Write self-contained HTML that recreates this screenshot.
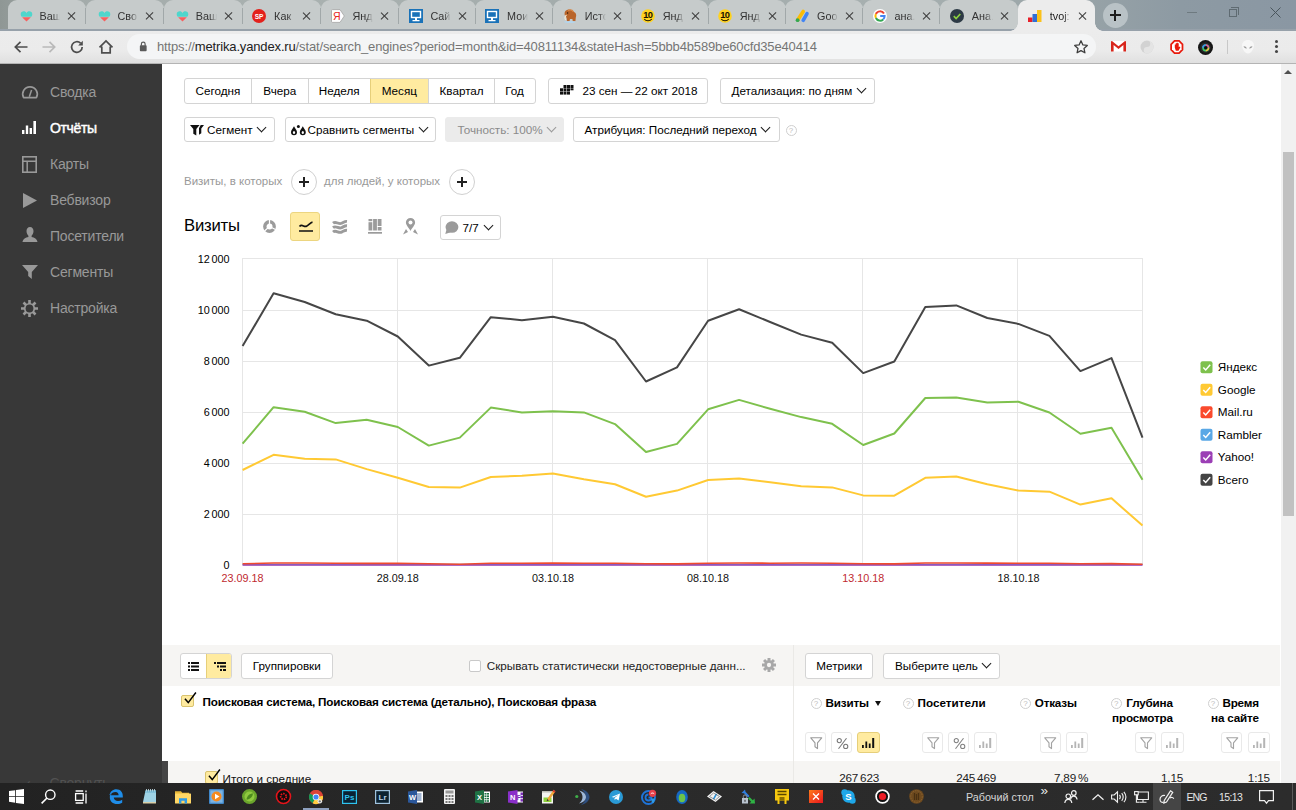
<!DOCTYPE html>
<html lang="ru">
<head>
<meta charset="utf-8">
<title>Яндекс.Метрика</title>
<style>
*{box-sizing:border-box;margin:0;padding:0}
html,body{width:1296px;height:810px;overflow:hidden;background:#fff}
body{position:relative;font-family:"Liberation Sans",Arial,sans-serif;font-size:13px;color:#000}
.abs{position:absolute}
svg{position:absolute;overflow:visible}
/* ---------- browser chrome ---------- */
#tabstrip{position:absolute;left:0;top:0;width:1296px;height:31px;
 background:linear-gradient(90deg,#8f9795 0px,#a3abaa 60px,#a9b1b0 300px,#a2abab 620px,#a7b0b0 900px,#9aa5a8 1060px,#8d9aa3 1180px,#8a97a3 1296px)}
.tab{position:absolute;top:0;height:30px;width:77.8px;background:#c6cbcb;border-radius:9px 9px 0 0}
.tab i{position:absolute;left:77.2px;top:8px;width:1px;height:16px;background:#a1a8a9;z-index:3}
.tab .t{position:absolute;left:31.8px;top:8.5px;font-size:10.8px;line-height:15px;color:#333;width:21px;overflow:hidden;white-space:nowrap;
 -webkit-mask-image:linear-gradient(90deg,#000 65%,transparent 100%);mask-image:linear-gradient(90deg,#000 65%,transparent 100%)}
.tab .x{position:absolute;left:59.8px;top:11.5px;width:9px;height:9px}
.tab .x:before,.tab .x:after{content:"";position:absolute;left:4px;top:-0.5px;width:1.3px;height:10px;background:#3c3c3c}
.tab .x:before{transform:rotate(45deg)}.tab .x:after{transform:rotate(-45deg)}
.tab .f{position:absolute;left:10.2px;top:8.7px;width:14px;height:14px}
.tab.act{background:#ececec;z-index:2;height:31px}
.tab.act .t{color:#1c1c1c}
.tab.act:before,.tab.act:after{content:"";position:absolute;bottom:0;width:8px;height:8px}
.tab.act:before{left:-8px;background:radial-gradient(circle at 0 0,transparent 7.5px,#ececec 8px)}
.tab.act:after{right:-8px;background:radial-gradient(circle at 100% 0,transparent 7.5px,#ececec 8px)}
.tab.act i,.tab.nosep i{display:none}
#tabline{position:absolute;left:0;top:29px;width:1296px;height:2px;background:#97a1aa;z-index:1}
#toolbar{position:absolute;left:0;top:31px;width:1296px;height:33px;background:linear-gradient(180deg,#ececec 0,#ebebeb 60%,#e0e0e0 100%);border-bottom:1px solid #b4b4b4}
#omni{position:absolute;left:127px;top:3px;width:969px;height:25px;border-radius:13px;background:#f4f5f6}
#url{position:absolute;left:30px;top:4.4px;font-size:13px;line-height:17px;color:#757575;white-space:nowrap;letter-spacing:-0.15px}
#url b{font-weight:normal;color:#222}
/* ---------- sidebar ---------- */
#side{position:absolute;left:0;top:64px;width:162px;height:719px;background:#383838}
.nav{position:absolute;left:50px;margin-top:0.8px;font-size:14px;line-height:18px;color:#999;white-space:nowrap;letter-spacing:-0.2px}
.nav.on{color:#fff;font-weight:normal;font-size:14px;letter-spacing:-0.35px;-webkit-text-stroke:0.45px #fff}
/* ---------- scroll bar ---------- */
#sb{position:absolute;left:1280.7px;top:64px;width:15.3px;height:719px;background:#f1f1f1}
#sb .th{position:absolute;left:2.3px;top:88px;width:11px;height:364.3px;background:#c1c1c1}
#sb .up{position:absolute;left:3.5px;top:6px;width:0;height:0;border:4px solid transparent;border-top:0;border-bottom:4px solid #505050}
/* ---------- page controls ---------- */
.btn{position:absolute;height:25.4px;border:1px solid #d4d4d4;border-radius:3px;background:#fff;font-size:11.7px;line-height:23px;white-space:nowrap;text-align:center;color:#000}
.grp{position:absolute;height:25px;border:1px solid #d4d4d4;border-radius:3px;background:#fff;overflow:hidden}
.grp span{position:absolute;top:0;bottom:0;line-height:23px;text-align:center;font-size:11.7px;border-left:1px solid #d4d4d4;white-space:nowrap}
.grp span:first-child{border-left:0}
.grp span.y{background:#ffeba0;border-left-color:#e6cf7a}
.car{display:inline-block;width:7px;height:7px;border-right:1.6px solid #1a1a1a;border-bottom:1.6px solid #1a1a1a;transform:rotate(45deg);position:relative;top:-3px;margin-left:5.5px}
.gtx{position:absolute;font-size:11.5px;color:#999;white-space:nowrap;line-height:14px}
.plus{position:absolute;width:26px;height:26px;border:1px solid #d0d0d0;border-radius:50%;background:#fff}
.plus:before{content:"";position:absolute;left:7px;top:11px;width:10px;height:2px;background:#222}
.plus:after{content:"";position:absolute;left:11px;top:7px;width:2px;height:10px;background:#222}
/* ---------- table ---------- */
#tbl{position:absolute;left:162px;top:645px;width:1118px;height:138px;background:#f6f5f3}
#thead{position:absolute;left:0;top:41px;width:1118px;height:75px;background:#fff}
.hb{position:absolute;font-weight:bold;font-size:11.7px;line-height:15px;white-space:nowrap;color:#000;letter-spacing:-0.2px}
.q{position:absolute;width:11px;height:11px;border:1px solid #cfcfcf;border-radius:50%;font-size:8px;line-height:9px;text-align:center;color:#bdbdbd}
.ib{position:absolute;top:87px;width:21px;height:21px;border:1px solid #e9e9e9;border-radius:3px;background:#fff}
.ib.y{background:#ffeba0;border-color:#e6cf7a}
.val{position:absolute;top:126px;font-size:11.7px;line-height:14px;color:#222;white-space:nowrap;text-align:right;letter-spacing:-0.2px}
/* ---------- taskbar ---------- */
#task{position:absolute;left:0;top:783px;width:1296px;height:27px;background:linear-gradient(90deg,#222 0,#262626 300px,#2a2a2a 600px,#2c2c2c 1296px)}
.tk{position:absolute;top:0;width:24px;height:27px}
.tt{position:absolute;color:#e6e6e6;font-size:11.5px;line-height:14px;white-space:nowrap;top:7px}
</style>
</head>
<body>

<!-- ================= BROWSER CHROME ================= -->
<div id="tabstrip">
<div id="tabline"></div>
<div class="tab" style="left:7.7px;width:78.3px"><svg class="f" viewBox="-1.5 0 14 14"><path d="M7 4.2C6.2 1.6 1.2 1.6 1.2 5.2c0 1 .4 1.9 1 2.6h9.6c.6-.7 1-1.6 1-2.6C12.8 1.6 7.8 1.6 7 4.2z" fill="#4fd6cc"/><path d="M2.6 8.2h8.8L7 12.4z" fill="#f8605f"/></svg><span class="t">Ваш</span><span class="x"></span><i style="left:77.5px"></i></div>
<div class="tab" style="left:85.7px;width:78.6px"><svg class="f" viewBox="-1.5 0 14 14"><path d="M7 4.2C6.2 1.6 1.2 1.6 1.2 5.2c0 1 .4 1.9 1 2.6h9.6c.6-.7 1-1.6 1-2.6C12.8 1.6 7.8 1.6 7 4.2z" fill="#4fd6cc"/><path d="M2.6 8.2h8.8L7 12.4z" fill="#f8605f"/></svg><span class="t">Сво,</span><span class="x"></span><i style="left:77.8px"></i></div>
<div class="tab" style="left:164.0px;width:78.6px"><svg class="f" viewBox="-1.5 0 14 14"><path d="M7 4.2C6.2 1.6 1.2 1.6 1.2 5.2c0 1 .4 1.9 1 2.6h9.6c.6-.7 1-1.6 1-2.6C12.8 1.6 7.8 1.6 7 4.2z" fill="#4fd6cc"/><path d="M2.6 8.2h8.8L7 12.4z" fill="#f8605f"/></svg><span class="t">Ваш</span><span class="x"></span><i style="left:77.8px"></i></div>
<div class="tab" style="left:242.3px;width:78.7px"><svg class="f" viewBox="0 0 14 14"><circle cx="7" cy="7" r="7" fill="#e3211c"/><text x="7" y="9.6" font-size="6.5" font-weight="bold" fill="#fff" text-anchor="middle" font-family="Liberation Sans,sans-serif">SP</text></svg><span class="t">Как</span><span class="x"></span><i style="left:77.9px"></i></div>
<div class="tab" style="left:320.7px;width:78.2px"><svg class="f" viewBox="0 0 14 14"><path d="M1.5 .6h7.5l4.300 6.4-4.300 6.4H1.5a1 1 0 0 1-1-1V1.6a1 1 0 0 1 1-1z" fill="#fff" stroke="#a2a2a2" stroke-width=".8"/><text x="5.700" y="10.8" font-size="10.5" fill="#e8281e" text-anchor="middle" font-family="Liberation Sans,sans-serif">Я</text></svg><span class="t">Янд</span><span class="x"></span><i style="left:77.4px"></i></div>
<div class="tab" style="left:398.6px;width:77.0px"><svg class="f" viewBox="0 0 14 14"><rect width="14" height="14" fill="#1a72b8"/><rect x="2.5" y="2.5" width="9" height="6" fill="none" stroke="#fff" stroke-width="1.4"/><path d="M6 9h2v2h2.5v1.300h-7V11H6z" fill="#fff"/></svg><span class="t">Сай</span><span class="x"></span><i style="left:76.2px"></i></div>
<div class="tab" style="left:475.3px;width:78.0px"><svg class="f" viewBox="0 0 14 14"><rect width="14" height="14" fill="#1a72b8"/><rect x="2.5" y="2.5" width="9" height="6" fill="none" stroke="#fff" stroke-width="1.4"/><path d="M6 9h2v2h2.5v1.300h-7V11H6z" fill="#fff"/></svg><span class="t">Мои</span><span class="x"></span><i style="left:77.2px"></i></div>
<div class="tab" style="left:553.0px;width:78.3px"><svg class="f" viewBox="0 0 14 14"><path d="M2.2 2.2C4.2-.3 9.5-.2 11 3c2 .6 2.8 3.2 1.8 5.4l-.4 3.8h-2.6l-.4-2.2H7l-.5 2.2H4l-.4-3.4C1.5 7.5 1 4 2.2 2.2z" fill="#b9652b"/><path d="M5 1.5c2-.8 4.5-.3 5.5 1.5" stroke="#d98a4a" stroke-width="1.2" fill="none"/><path d="M3.5 6C1.8 7.2 1.5 9.6 2.8 11" stroke="#f6ecd8" stroke-width="1.100" fill="none"/><circle cx="4.6" cy="4" r=".7" fill="#2a1606"/><ellipse cx="7" cy="13" rx="6" ry=".9" fill="#b5d5ec"/></svg><span class="t">Исто</span><span class="x"></span><i style="left:77.5px"></i></div>
<div class="tab" style="left:631.0px;width:77.3px"><svg class="f" viewBox="0 0 14 14"><circle cx="7" cy="7" r="6.8" fill="#ffd21f"/><text x="6.8" y="8.6" font-size="9.300" font-weight="bold" fill="#1a1200" text-anchor="middle" letter-spacing="-.6" font-family="Liberation Sans,sans-serif">10</text><path d="M3.2 10c2 2.4 5.6 2.4 7.6 0" stroke="#1a1200" stroke-width="1.100" fill="none"/></svg><span class="t">Янд</span><span class="x"></span><i style="left:76.5px"></i></div>
<div class="tab" style="left:708.0px;width:77.6px"><svg class="f" viewBox="0 0 14 14"><circle cx="7" cy="7" r="6.8" fill="#ffd21f"/><text x="6.8" y="8.6" font-size="9.300" font-weight="bold" fill="#1a1200" text-anchor="middle" letter-spacing="-.6" font-family="Liberation Sans,sans-serif">10</text><path d="M3.2 10c2 2.4 5.6 2.4 7.6 0" stroke="#1a1200" stroke-width="1.100" fill="none"/></svg><span class="t">Янд</span><span class="x"></span><i style="left:76.8px"></i></div>
<div class="tab" style="left:785.3px;width:77.7px"><svg class="f" viewBox="0 0 14 14"><path d="M2.8 10.8L8.2 2.5" stroke="#fbbc04" stroke-width="3.6" stroke-linecap="round"/><path d="M8.2 11.300L12 4.6" stroke="#4285f4" stroke-width="3.6" stroke-linecap="round"/><circle cx="2.6" cy="11.2" r="1.900" fill="#34a853"/></svg><span class="t">Goo</span><span class="x"></span><i style="left:76.9px"></i></div>
<div class="tab" style="left:862.7px;width:77.6px"><svg class="f" viewBox="0 0 14 14"><circle cx="7" cy="7" r="7" fill="#fff"/><path d="M11 4.6A4.6 4.6 0 0 0 2.900 5" stroke="#ea4335" stroke-width="2" fill="none"/><path d="M2.900 5a4.6 4.6 0 0 0 0 4" stroke="#fbbc05" stroke-width="2" fill="none"/><path d="M2.900 9a4.6 4.6 0 0 0 7.300 1.4" stroke="#34a853" stroke-width="2" fill="none"/><path d="M10.2 10.4A4.6 4.6 0 0 0 11.6 7H7.2" stroke="#4285f4" stroke-width="2" fill="none"/></svg><span class="t">ана.</span><span class="x"></span><i style="left:76.8px"></i></div>
<div class="tab nosep" style="left:940.0px;width:78.3px"><svg class="f" viewBox="0 0 14 14"><circle cx="7" cy="7" r="7" fill="#2d3a45"/><path d="M3.8 7.2l2.300 2.300 4.2-4.5" stroke="#8bd13f" stroke-width="1.700" fill="none"/></svg><span class="t">Ана.</span><span class="x"></span><i style="left:77.5px"></i></div>
<div class="tab act" style="left:1018.0px;width:77.0px"><svg class="f" viewBox="0 0 14 14"><rect x="0" y="8.5" width="4.5" height="4.5" fill="#e8202a"/><rect x="4.5" y="5" width="4.5" height="8" fill="#2f6fd6"/><rect x="9" y="1" width="4.5" height="12" fill="#fbc21b"/></svg><span class="t">tvoj:</span><span class="x"></span><i style="left:76.2px"></i></div>
<div class="abs" style="left:1102.5px;top:2.5px;width:25px;height:25px;border-radius:50%;background:#b9c2c6"></div>
<div class="abs" style="left:1109.5px;top:14px;width:11px;height:2px;background:#1d1d1d"></div><div class="abs" style="left:1114px;top:9.5px;width:2px;height:11px;background:#1d1d1d"></div>
<div class="abs" style="left:1187px;top:12px;width:10px;height:1px;background:#6e7a80"></div>
<div class="abs" style="left:1229px;top:9px;width:8px;height:8px;border:1px solid #5f6b72"></div><div class="abs" style="left:1231px;top:7px;width:8px;height:8px;border-top:1px solid #5f6b72;border-right:1px solid #5f6b72"></div>
<svg style="left:1270px;top:7px" width="11" height="11" viewBox="0 0 11 11"><path d="M.5.5l10 10M10.5.5l-10 10" stroke="#4a565d" stroke-width="1"/></svg>
</div>
<div id="toolbar">
<svg style="left:13px;top:8px" width="16" height="16" viewBox="0 0 16 16"><path d="M14.5 8H2.500M7.5 2.800L2.3 8l5.2 5.2" stroke="#4d4d4d" stroke-width="1.7" fill="none"/></svg>
<svg style="left:41px;top:8px" width="16" height="16" viewBox="0 0 16 16"><path d="M1.5 8h12M8.5 2.800L13.7 8l-5.2 5.2" stroke="#b9b9b9" stroke-width="1.7" fill="none"/></svg>
<svg style="left:69px;top:8px" width="16" height="16" viewBox="0 0 16 16"><path d="M13.2 8A5.3 5.3 0 1 1 11.6 4.2" stroke="#4d4d4d" stroke-width="1.7" fill="none"/><path d="M13.8 1.800v4.600H9.200z" fill="#4d4d4d"/></svg>
<svg style="left:98px;top:8px" width="16" height="16" viewBox="0 0 16 16"><path d="M1.5 8.300L8 2l6.5 6.300M3.8 7.500v6.300h8.400V7.5" stroke="#4d4d4d" stroke-width="1.7" fill="none"/></svg>
<div id="omni">
 <svg style="left:11.5px;top:7px" width="8.5" height="11" viewBox="0 0 10 13"><rect x="1" y="5" width="8" height="7" rx="1" fill="#5a5a5a"/><path d="M2.8 5.500V3.600a2.2 2.2 0 0 1 4.4 0v1.9" stroke="#5a5a5a" stroke-width="1.4" fill="none"/></svg>
 <div id="url">https://<b>metrika.yandex.ru</b>/stat/search_engines?period=month&amp;id=40811134&amp;stateHash=5bbb4b589be60cfd35e40414</div>
 <svg style="left:946px;top:5px" width="16" height="16" viewBox="0 0 16 16"><path d="M8 1.800l1.9 4.1 4.4.5-3.3 3 .9 4.400L8 11.600l-3.9 2.2.9-4.4-3.3-3 4.4-.5z" stroke="#3d3d3d" stroke-width="1.3" fill="none" stroke-linejoin="round"/></svg>
</div>
<!-- extensions -->
<svg style="left:1111px;top:10.2px" width="15" height="10.5" viewBox="0 0 15 10.5"><rect x="0" y="0" width="15" height="10.5" rx=".8" fill="#fff"/><path d="M0 .8V10.500h2.600V4L7.5 8l4.9-4v6.500H15V.8C15 .2 14.3-.2 13.7.3L7.5 5.2 1.3.3C.7-.2 0 .2 0 .8z" fill="#d8261c"/></svg>
<svg style="left:1140px;top:9px" width="14" height="14" viewBox="0 0 14 14"><circle cx="7" cy="7" r="6.5" fill="#d2d2d2"/><path d="M7 .5a6.5 6.5 0 0 1 0 13 3.250 3.250 0 0 1 0-6.5 3.250 3.250 0 0 0 0-6.500z" fill="#e4e4e4"/></svg>
<svg style="left:1169.800px;top:8.800px" width="13.6" height="14" viewBox="0 0 15 16"><path d="M4.5 0h6L15 4.500v7L10.5 16h-6L0 11.500v-7z" fill="#e81a0c"/><path d="M5.3 2h4.400L13 5.300v5.400L9.7 14H5.300L2 10.700V5.300z" fill="#fff"/><path d="M5.2 8.600V5h1.100V3.800h1.100V3.200h1.200v.6h1.100V8.400l1-.9.9.8-2.1 4H6.400z" fill="#e81a0c"/></svg>
<svg style="left:1197.500px;top:8.500px" width="15" height="15" viewBox="0 0 16 16"><circle cx="8" cy="8" r="8" fill="#161616"/><circle cx="8" cy="8" r="5.6" fill="#2a2a2a"/><circle cx="8.3" cy="8.3" r="3" fill="none" stroke="#38c76a" stroke-width="1.7"/><path d="M8.3 5.300A3 3 0 0 1 11.3 8.3" stroke="#e94f9a" stroke-width="1.7" fill="none"/><path d="M11.3 8.300A3 3 0 0 1 8.3 11.3" stroke="#f2c03a" stroke-width="1.7" fill="none"/><path d="M5.3 8.300A3 3 0 0 1 8.3 5.3" stroke="#3f8cf0" stroke-width="1.7" fill="none"/><circle cx="8.3" cy="8.3" r="1.5" fill="#0c0c0c"/></svg>
<div class="abs" style="left:1227px;top:9px;width:1px;height:14px;background:#c8c8c8"></div>
<svg style="left:1240px;top:8px" width="16" height="16" viewBox="0 0 16 16"><path d="M8 1c3.6 0 6 2.4 6 5.5 0 3.5-3 8-6 8s-6-4.5-6-8C2 3.4 4.4 1 8 1z" fill="#f7f7f7"/><path d="M3.6 7.200c1.4-.2 2.8.6 3.2 2.2-1.6.2-2.9-.7-3.2-2.200zm8.8 0c-1.4-.2-2.8.6-3.2 2.2 1.6.2 2.9-.7 3.2-2.200z" fill="#9a9a9a"/></svg>
<div class="abs" style="left:1275px;top:9px;width:3px;height:3px;border-radius:50%;background:#444;box-shadow:0 5px 0 #444,0 10px 0 #444"></div>

</div>

<!-- ================= SIDEBAR ================= -->
<div id="side">
<svg style="left:21px;top:21px" width="18" height="14" viewBox="0 0 18 14"><path d="M2.600 12.600A7.300 7.300 0 1 1 15.400 12.600z" fill="none" stroke="#999" stroke-width="1.700" stroke-linejoin="round"/><path d="M8.300 11.800L10.600 5" stroke="#999" stroke-width="1.500"/></svg>
<div class="nav" style="top:18px">Сводка</div>
<svg style="left:22px;top:57px" width="14" height="13" viewBox="0 0 14 13"><rect x="0" y="9" width="2.400" height="4" fill="#fff"/><rect x="3.800" y="4.500" width="2.400" height="8.500" fill="#fff"/><rect x="7.600" y="7" width="2.400" height="6" fill="#fff"/><rect x="11.400" y="0" width="2.600" height="13" fill="#fff"/></svg>
<div class="nav on" style="top:54px">Отчёты</div>
<svg style="left:22px;top:92px" width="15" height="17" viewBox="0 0 15 17"><rect x=".8" y=".8" width="13.400" height="15.400" fill="none" stroke="#999" stroke-width="1.600"/><path d="M.8 5.200h13.400M5.200 5.200v11" stroke="#999" stroke-width="1.500"/></svg>
<div class="nav" style="top:90px">Карты</div>
<svg style="left:23px;top:129px" width="14" height="15" viewBox="0 0 14 15"><path d="M0 0l14 7.500L0 15z" fill="#999"/></svg>
<div class="nav" style="top:126px">Вебвизор</div>
<svg style="left:22px;top:163px" width="16" height="15" viewBox="0 0 16 15"><path d="M8 0c2.200 0 3.500 1.700 3.500 4S10.300 8.200 9.600 8.800v1.200c2.800.6 5.400 1.800 5.900 5H.5c.5-3.200 3.100-4.400 5.900-5V8.800C5.700 8.200 4.500 6.300 4.500 4S5.800 0 8 0z" fill="#999"/></svg>
<div class="nav" style="top:162px">Посетители</div>
<svg style="left:22px;top:201px" width="16" height="14" viewBox="0 0 16 14"><path d="M0 0h16L9.800 7v7L6.200 11V7z" fill="#999"/></svg>
<div class="nav" style="top:198px">Сегменты</div>
<svg style="left:21px;top:236px" width="17" height="17" viewBox="0 0 17 17"><g stroke="#999" stroke-width="2.600"><path d="M8.500 0v17M0 8.500h17M2.500 2.500l12 12M14.500 2.500l-12 12"/></g><circle cx="8.500" cy="8.500" r="5.600" fill="#999"/><circle cx="8.500" cy="8.500" r="3.900" fill="#383838"/></svg>
<div class="nav" style="top:234px">Настройка</div>
<div class="abs" style="left:26px;top:710.3px;font-size:14px;line-height:18px;color:#525252;white-space:nowrap">‹</div><div class="abs" style="left:49.5px;top:710.3px;font-size:14px;line-height:18px;color:#525252;white-space:nowrap;letter-spacing:-0.2px">Свернуть</div>

</div>

<!-- ================= CONTROLS ================= -->
<div class="grp" style="left:184px;top:78.2px;width:351.6px;height:25.6px">
 <span style="left:0;width:66px">Сегодня</span><span style="left:66px;width:56.5px">Вчера</span><span style="left:122.5px;width:62.5px">Неделя</span><span class="y" style="left:185px;width:57.7px">Месяц</span><span style="left:242.7px;width:66.8px">Квартал</span><span style="left:308.6px;width:41px">Год</span>
</div>
<div class="btn" style="left:548px;top:78.2px;height:25.6px;width:160px;text-align:left;padding-left:33.5px">23 сен —&thinsp;22 окт 2018
 <svg style="left:11px;top:6.3px" width="13.5" height="9.6" viewBox="0 0 13.5 9.6"><g fill="#111"><rect x="3.5" y="0" width="3" height="3"/><rect x="7" y="0" width="3" height="3"/><rect x="10.5" y="0" width="3" height="3"/><rect x="0" y="3.3" width="3" height="3"/><rect x="3.5" y="3.3" width="3" height="3"/><rect x="7" y="3.3" width="3" height="3"/><rect x="10.5" y="3.3" width="3" height="2"/><rect x="0" y="6.6" width="3" height="3"/><rect x="3.5" y="6.6" width="3" height="3"/><rect x="7" y="6.6" width="3" height="3"/></g></svg>
</div>
<div class="btn" style="left:720px;top:78.2px;height:25.6px;width:154.5px;text-align:left;padding-left:10.5px">Детализация: по дням<i class="car"></i></div>

<div class="btn" style="left:184px;top:117px;width:90.5px;text-align:left;padding-left:22px">Сегмент<i class="car"></i>
 <svg style="left:5px;top:6.5px" width="14" height="10.5" viewBox="0 0 14 10.5"><path d="M0 0h9.6L6.3 4v6.5L3.3 8.7V4z" fill="#111"/><path d="M10.7 0H14L11.3 3.6v4.6L9 9.8V3.3z" fill="#111"/></svg>
</div>
<div class="btn" style="left:284.5px;top:117px;width:151px;text-align:left;padding-left:22px">Сравнить сегменты<i class="car"></i>
 <svg style="left:5px;top:6.5px" width="15" height="10.5" viewBox="0 0 15 10.5"><path d="M3 1.2C4.3 3.5 6 5.3 6 7.3a3 3 0 0 1-6 0C0 5.3 1.7 3.5 3 1.2z" fill="#111"/><ellipse cx="3" cy="7.400" rx="1.1" ry="1.5" fill="#fff"/><path d="M11.8 1.2c1.3 2.3 3 4.1 3 6.1a3 3 0 0 1-6 0c0-2 1.7-3.8 3-6.1z" fill="#111"/><ellipse cx="11.8" cy="7.400" rx="1.1" ry="1.5" fill="#fff"/><circle cx="7.400" cy="1.5" r="1.5" fill="#111"/></svg>
</div>
<div class="btn" style="left:444.5px;top:117px;width:119.5px;text-align:left;padding-left:12px;background:#ebebeb;border-color:#ebebeb;color:#8a8a8a">Точность: 100%<i class="car" style="border-color:#999"></i></div>
<div class="btn" style="left:573px;top:117px;width:206.5px;text-align:left;padding-left:10.5px">Атрибуция: Последний переход<i class="car"></i></div>
<div class="q" style="left:785.5px;top:125px">?</div>

<div class="gtx" style="left:184px;top:174px">Визиты, в которых</div>
<div class="plus" style="left:291px;top:168.5px"></div>
<div class="gtx" style="left:324px;top:174px">для людей, у которых</div>
<div class="plus" style="left:448.5px;top:168.5px"></div>

<div class="abs" id="ttl" style="left:184px;top:215px;font-size:16.7px;line-height:22px;letter-spacing:-0.2px">Визиты</div>
<!-- chart type icons -->
<svg style="left:263px;top:220px" width="13" height="13" viewBox="0 0 13 13"><circle cx="6.5" cy="6.5" r="4.7" fill="none" stroke="#9b9b9b" stroke-width="3.4"/><path d="M6.5 6.5L6.5 0M6.5 6.5L12.5 9.5M6.5 6.5L1.5 11" stroke="#fff" stroke-width="1.2"/></svg>
<div class="abs" style="left:290px;top:212px;width:30px;height:28.5px;background:#ffeba0;border:1px solid #ecd580;border-radius:3px"></div>
<svg style="left:298.5px;top:221px" width="14" height="11" viewBox="0 0 14 11"><path d="M.5 5.5C3 2.5 5 6.5 7.5 5.2S11.5 1.5 13.5 1.2" stroke="#111" stroke-width="1.7" fill="none"/><path d="M0 10h14" stroke="#111" stroke-width="1.5"/></svg>
<svg style="left:333px;top:219.5px" width="14" height="14" viewBox="0 0 14 14"><g fill="none" stroke="#9b9b9b" stroke-width="2.9"><path d="M0 3.2C3 .7 5.5 4.8 8.5 3.3S12 1.2 14 1.400"/><path d="M0 7.6C3 5.1 5.5 9.2 8.5 7.7S12 5.6 14 5.8"/><path d="M0 12C3 9.5 5.5 13.6 8.5 12.1S12 10 14 10.2"/></g></svg>
<svg style="left:368px;top:219px" width="14" height="15" viewBox="0 0 14 15"><g fill="#9b9b9b"><rect x=".5" y="3.2" width="3.8" height="8.3"/><rect x=".5" y="0" width="3.8" height="2.2"/><rect x="5.1" y="0" width="3.8" height="11.5"/><rect x="9.7" y="0" width="3.8" height="7"/><rect x="9.7" y="8" width="3.8" height="3.5"/><rect x="0" y="13" width="14" height="1.7"/></g></svg>
<svg style="left:403px;top:218px" width="15" height="17" viewBox="0 0 15 17"><path d="M7.5 0a4.6 4.6 0 0 1 4.6 4.6c0 2.8-3.2 5.4-4.6 8.4C6.1 10 2.900 7.4 2.900 4.6A4.6 4.6 0 0 1 7.5 0z" fill="#9b9b9b"/><circle cx="7.5" cy="4.6" r="2" fill="#fff"/><path d="M0 16.5L3 11l2 3zM15 16.5L12 11l-2 3z" fill="#9b9b9b"/></svg>
<div class="btn" style="left:440px;top:215px;width:61px;text-align:left;padding-left:21.5px">7/7<i class="car" style="margin-left:6px"></i>
 <svg style="left:3.5px;top:4.5px" width="13.5" height="13.5" viewBox="0 0 13 13"><ellipse cx="6.7" cy="5.8" rx="6.2" ry="5.6" fill="#9b9b9b"/><path d="M1.5 8L.3 12.6 5.5 10.8z" fill="#9b9b9b"/></svg>
</div>


<!-- ================= CHART ================= -->
<svg style="left:0;top:0" width="1296" height="810" viewBox="0 0 1296 810" font-family="Liberation Sans,Arial,sans-serif">
<g stroke="#e6e6e6" stroke-width="1" fill="none">
<path d="M242.5 565.5H1142.5"/>
<path d="M242.5 514.5H1142.5"/>
<path d="M242.5 463.5H1142.5"/>
<path d="M242.5 412.5H1142.5"/>
<path d="M242.5 361.5H1142.5"/>
<path d="M242.5 310.5H1142.5"/>
<path d="M242.5 258.5H1142.5"/>
<path d="M242.5 258V565"/>
<path d="M397.5 258V565"/>
<path d="M552.5 258V565"/>
<path d="M707.5 258V565"/>
<path d="M862.5 258V565"/>
<path d="M1017.5 258V565"/>
<path d="M1142.5 258V565"/>
</g>
<g font-size="10.8" fill="#000" text-anchor="end">
<text x="229.5" y="569.1" word-spacing="-1.2">0</text>
<text x="229.5" y="518.1" word-spacing="-1.2">2 000</text>
<text x="229.5" y="467.0" word-spacing="-1.2">4 000</text>
<text x="229.5" y="416.0" word-spacing="-1.2">6 000</text>
<text x="229.5" y="365.0" word-spacing="-1.2">8 000</text>
<text x="229.5" y="313.9" word-spacing="-1.2">10 000</text>
<text x="229.5" y="262.9" word-spacing="-1.2">12 000</text>
</g>
<g font-size="10.8" text-anchor="middle">
<text x="242.6" y="582.3" fill="#c02a30">23.09.18</text>
<text x="397.8" y="582.3" fill="#111">28.09.18</text>
<text x="552.9" y="582.3" fill="#111">03.10.18</text>
<text x="708.1" y="582.3" fill="#111">08.10.18</text>
<text x="863.2" y="582.3" fill="#c02a30">13.10.18</text>
<text x="1018.4" y="582.3" fill="#111">18.10.18</text>
</g>
<polyline points="242.6,564.4 273.6,564.4 304.7,564.4 335.7,564.4 366.7,564.4 397.8,564.4 428.8,564.4 459.8,564.4 490.8,564.4 521.9,564.4 552.9,564.4 583.9,564.4 615.0,564.4 646.0,564.4 677.0,564.4 708.1,564.4 739.1,564.4 770.1,564.4 801.2,564.4 832.2,564.4 863.2,564.4 894.3,564.4 925.3,564.4 956.3,564.4 987.3,564.4 1018.4,564.4 1049.4,564.4 1080.4,564.4 1111.5,564.4 1142.5,564.4" fill="none" stroke="#5aa8e6" stroke-width="1.2" stroke-linejoin="round"/>
<polyline points="242.6,565.0 273.6,565.0 304.7,565.0 335.7,565.0 366.7,565.0 397.8,565.0 428.8,565.0 459.8,565.0 490.8,565.0 521.9,565.0 552.9,565.0 583.9,565.0 615.0,565.0 646.0,565.0 677.0,565.0 708.1,565.0 739.1,565.0 770.1,565.0 801.2,565.0 832.2,565.0 863.2,565.0 894.3,565.0 925.3,565.0 956.3,565.0 987.3,565.0 1018.4,565.0 1049.4,565.0 1080.4,565.0 1111.5,565.0 1142.5,565.0" fill="none" stroke="#9b3fb5" stroke-width="1.5" stroke-linejoin="round"/>
<polyline points="242.6,563.8 273.6,563.0 304.7,563.0 335.7,563.3 366.7,563.4 397.8,563.2 428.8,563.8 459.8,564.2 490.8,563.2 521.9,563.3 552.9,563.1 583.9,563.2 615.0,563.2 646.0,563.8 677.0,563.9 708.1,563.2 739.1,563.0 770.1,563.2 801.2,563.0 832.2,563.2 863.2,563.8 894.3,563.9 925.3,563.0 956.3,563.0 987.3,563.1 1018.4,563.2 1049.4,563.3 1080.4,563.8 1111.5,563.6 1142.5,564.2" fill="none" stroke="#f04a2e" stroke-width="1.6" stroke-linejoin="round"/>
<polyline points="242.6,470.0 273.6,454.8 304.7,458.7 335.7,459.4 366.7,469.1 397.8,477.8 428.8,487.0 459.8,487.6 490.8,477.0 521.9,475.7 552.9,473.5 583.9,479.3 615.0,484.3 646.0,496.7 677.0,490.6 708.1,480.0 739.1,478.5 770.1,482.2 801.2,486.3 832.2,487.4 863.2,495.4 894.3,495.7 925.3,477.8 956.3,476.5 987.3,484.3 1018.4,490.6 1049.4,491.7 1080.4,504.6 1111.5,498.3 1142.5,525.6" fill="none" stroke="#ffc933" stroke-width="2.0" stroke-linejoin="round"/>
<polyline points="242.6,443.7 273.6,407.2 304.7,411.8 335.7,423.1 366.7,419.8 397.8,427.0 428.8,445.6 459.8,437.6 490.8,407.6 521.9,412.4 552.9,411.3 583.9,412.4 615.0,424.1 646.0,452.0 677.0,443.9 708.1,409.3 739.1,399.9 770.1,408.8 801.2,417.1 832.2,423.8 863.2,445.0 894.3,433.5 925.3,398.0 956.3,397.5 987.3,402.5 1018.4,401.8 1049.4,412.5 1080.4,433.8 1111.5,427.8 1142.5,479.8" fill="none" stroke="#7ec14d" stroke-width="2.0" stroke-linejoin="round"/>
<polyline points="242.6,346.1 273.6,293.3 304.7,302.0 335.7,314.3 366.7,320.7 397.8,336.5 428.8,365.6 459.8,357.8 490.8,317.2 521.9,320.2 552.9,316.7 583.9,323.5 615.0,340.2 646.0,381.5 677.0,367.4 708.1,320.7 739.1,309.3 770.1,322.0 801.2,334.6 832.2,342.8 863.2,373.1 894.3,361.5 925.3,306.9 956.3,305.4 987.3,318.0 1018.4,323.9 1049.4,335.9 1080.4,371.1 1111.5,358.1 1142.5,437.6" fill="none" stroke="#464646" stroke-width="2.0" stroke-linejoin="round"/>
<rect x="1200.5" y="361.2" width="12" height="12" rx="2" fill="#7ec14d"/>
<path d="M1203.3 367.5l2.4 2.5 4.5-5.3" stroke="#fff" stroke-width="1.5" fill="none"/>
<text x="1217.8" y="371.4" font-size="11.7" fill="#000">Яндекс</text>
<rect x="1200.5" y="383.7" width="12" height="12" rx="2" fill="#ffc933"/>
<path d="M1203.3 390.0l2.4 2.5 4.5-5.3" stroke="#fff" stroke-width="1.5" fill="none"/>
<text x="1217.8" y="393.9" font-size="11.7" fill="#000">Google</text>
<rect x="1200.5" y="406.2" width="12" height="12" rx="2" fill="#fa4a2d"/>
<path d="M1203.3 412.5l2.4 2.5 4.5-5.3" stroke="#fff" stroke-width="1.5" fill="none"/>
<text x="1217.8" y="416.4" font-size="11.7" fill="#000">Mail.ru</text>
<rect x="1200.5" y="428.7" width="12" height="12" rx="2" fill="#5aa8e6"/>
<path d="M1203.3 435.0l2.4 2.5 4.5-5.3" stroke="#fff" stroke-width="1.5" fill="none"/>
<text x="1217.8" y="438.9" font-size="11.7" fill="#000">Rambler</text>
<rect x="1200.5" y="451.2" width="12" height="12" rx="2" fill="#9b3fb5"/>
<path d="M1203.3 457.5l2.4 2.5 4.5-5.3" stroke="#fff" stroke-width="1.5" fill="none"/>
<text x="1217.8" y="461.4" font-size="11.7" fill="#000">Yahoo!</text>
<rect x="1200.5" y="473.7" width="12" height="12" rx="2" fill="#444444"/>
<path d="M1203.3 480.0l2.4 2.5 4.5-5.3" stroke="#fff" stroke-width="1.5" fill="none"/>
<text x="1217.8" y="483.9" font-size="11.7" fill="#000">Всего</text>
</svg>

<!-- ================= TABLE ================= -->
<div id="tbl">
<div id="thead"></div>
<div class="abs" style="left:0;top:115.500px;width:5.500px;height:23px;background:#454545"></div>
<div class="abs" style="left:631.0px;top:0;width:1px;height:138px;background:#eae9e6"></div>
<div class="grp" style="left:17.8px;top:8.0px;width:52.400px;height:25.900px"><span style="left:0;width:25px"></span><span class="y" style="left:25px;width:25.400px"></span></div>
<svg style="left:26.0px;top:16.5px" width="11" height="9" viewBox="0 0 11 9"><g fill="#111"><rect x="0" y="0" width="2" height="2"/><rect x="3" y="0" width="8" height="2"/><rect x="0" y="3.5" width="2" height="2"/><rect x="3" y="3.5" width="8" height="2"/><rect x="0" y="7" width="2" height="2"/><rect x="3" y="7" width="8" height="2"/></g></svg>
<svg style="left:51.5px;top:16.5px" width="12" height="9" viewBox="0 0 12 9"><g fill="#111"><rect x="0" y="0" width="2" height="2"/><rect x="3" y="0" width="9" height="2"/><rect x="3" y="3.5" width="2" height="2"/><rect x="6" y="3.5" width="6" height="2"/><rect x="6" y="7" width="2" height="2"/><rect x="9" y="7" width="3" height="2"/></g></svg>
<div class="btn ys" style="height:25.900px;line-height:23.500px;left:78.8px;top:8.0px;width:92px">Группировки</div>
<div class="abs" style="left:307.3px;top:14.5px;width:12px;height:12px;border:1px solid #c9c9c9;border-radius:2px;background:#fff"></div>
<div class="abs ys" id="hide" style="left:324.7px;top:13.8px;font-size:11.700px;line-height:14px;white-space:nowrap;color:#222">Скрывать статистически недостоверные данн...</div>
<svg style="left:600.2px;top:12.8px" width="14" height="14" viewBox="0 0 17 17"><g stroke="#a8a8a8" stroke-width="3.6"><path d="M8.5 0v17M0 8.500h17M2.5 2.500l12 12M14.5 2.500l-12 12"/></g><circle cx="8.5" cy="8.5" r="5.8" fill="#a8a8a8"/><circle cx="8.5" cy="8.5" r="2.6" fill="#f6f5f3"/></svg>
<div class="btn ys" style="height:25.900px;line-height:23.500px;left:643.2px;top:8.0px;width:68px">Метрики</div>
<div class="btn ys" style="height:25.900px;line-height:23.500px;left:721.0px;top:8.0px;width:116.500px;text-align:left;padding-left:11px">Выберите цель<i class="car"></i></div>
<div class="abs" style="left:19.4px;top:49.6px;width:12.500px;height:12.500px;border:1px solid #d9c36f;border-radius:2px;background:#ffeba0"></div><svg style="left:22.2px;top:47.2px" width="13" height="13" viewBox="0 0 14 14"><path d="M1 7.200l3.6 4.200L12.8 .5" stroke="#000" stroke-width="1.6" fill="none"/></svg>
<div class="hb" id="h0" style="left:40.5px;top:49.2px">Поисковая система, Поисковая система (детально), Поисковая фраза</div>
<div class="q" style="left:648.5px;top:52.8px">?</div>
<div class="hb" id="h1" style="left:663.6px;top:50.0px">Визиты</div>
<div class="abs" style="left:712.5px;top:55.5px;width:0;height:0;border:3.500px solid transparent;border-bottom:0;border-top:5.500px solid #111"></div>
<div class="q" style="left:740.5px;top:52.8px">?</div>
<div class="hb" id="h2" style="left:755.5px;top:50.0px;letter-spacing:0.030px">Посетители</div>
<div class="q" style="left:858.0px;top:52.8px">?</div>
<div class="hb" id="h3" style="left:872.8px;top:50.0px">Отказы</div>
<div class="q" style="left:948.8px;top:52.8px">?</div>
<div class="hb" id="h4" style="right:107.3px;top:50.0px;text-align:right">Глубина<br>просмотра</div>
<div class="q" style="left:1045.5px;top:52.8px">?</div>
<div class="hb" id="h5" style="right:21.2px;top:50.0px;text-align:right">Время<br>на сайте</div>
<div class="ib" style="left:643.0px;width:21.0px"><svg style="left:3.500px;top:3.700px" width="12.5" height="12.5" viewBox="0 0 11 11"><path d="M.7.700h9.600L6.6 5.200v5L4.4 8.600V5.200z" fill="none" stroke="#9a9a9a" stroke-width="1" stroke-linejoin="round"/></svg></div>
<div class="ib" style="left:669.0px;width:21.0px"><svg style="left:3.500px;top:3.500px" width="13" height="13" viewBox="0 0 13 13"><g fill="none" stroke="#777" stroke-width="1.050"><circle cx="3.3" cy="3.6" r="2.1"/><circle cx="9.7" cy="9.4" r="2.1"/><path d="M10.5 1.200L2.5 11.8"/></g></svg></div>
<div class="ib y" style="left:695.3px;width:22.5px"><svg style="left:4px;top:5px" width="13" height="10" viewBox="0 0 13 10"><g fill="#111"><rect x="0" y="7" width="1.8" height="3"/><rect x="3.4" y="3.5" width="1.8" height="6.5"/><rect x="6.8" y="5.5" width="1.8" height="4.5"/><rect x="10.2" y="0" width="2" height="10"/></g></svg></div>
<div class="ib" style="left:760.0px;width:21.0px"><svg style="left:3.500px;top:3.700px" width="12.5" height="12.5" viewBox="0 0 11 11"><path d="M.7.700h9.600L6.6 5.200v5L4.4 8.600V5.200z" fill="none" stroke="#a3a3a3" stroke-width="1" stroke-linejoin="round"/></svg></div>
<div class="ib" style="left:786.2px;width:21.0px"><svg style="left:3.500px;top:3.500px" width="13" height="13" viewBox="0 0 13 13"><g fill="none" stroke="#808080" stroke-width="1.050"><circle cx="3.3" cy="3.6" r="2.1"/><circle cx="9.7" cy="9.4" r="2.1"/><path d="M10.5 1.200L2.5 11.8"/></g></svg></div>
<div class="ib" style="left:812.2px;width:22.5px"><svg style="left:4px;top:5px" width="13" height="10" viewBox="0 0 13 10"><g fill="#b5b5b5"><rect x="0" y="7" width="1.8" height="3"/><rect x="3.4" y="3.5" width="1.8" height="6.5"/><rect x="6.8" y="5.5" width="1.8" height="4.5"/><rect x="10.2" y="0" width="2" height="10"/></g></svg></div>
<div class="ib" style="left:877.6px;width:21.0px"><svg style="left:3.500px;top:3.700px" width="12.5" height="12.5" viewBox="0 0 11 11"><path d="M.7.700h9.600L6.6 5.200v5L4.4 8.600V5.200z" fill="none" stroke="#a3a3a3" stroke-width="1" stroke-linejoin="round"/></svg></div>
<div class="ib" style="left:903.8px;width:22.5px"><svg style="left:4px;top:5px" width="13" height="10" viewBox="0 0 13 10"><g fill="#b5b5b5"><rect x="0" y="7" width="1.8" height="3"/><rect x="3.4" y="3.5" width="1.8" height="6.5"/><rect x="6.8" y="5.5" width="1.8" height="4.5"/><rect x="10.2" y="0" width="2" height="10"/></g></svg></div>
<div class="ib" style="left:973.2px;width:21.0px"><svg style="left:3.500px;top:3.700px" width="12.5" height="12.5" viewBox="0 0 11 11"><path d="M.7.700h9.600L6.6 5.200v5L4.4 8.600V5.200z" fill="none" stroke="#a3a3a3" stroke-width="1" stroke-linejoin="round"/></svg></div>
<div class="ib" style="left:999.4px;width:22.5px"><svg style="left:4px;top:5px" width="13" height="10" viewBox="0 0 13 10"><g fill="#b5b5b5"><rect x="0" y="7" width="1.8" height="3"/><rect x="3.4" y="3.5" width="1.8" height="6.5"/><rect x="6.8" y="5.5" width="1.8" height="4.5"/><rect x="10.2" y="0" width="2" height="10"/></g></svg></div>
<div class="ib" style="left:1059.4px;width:21.0px"><svg style="left:3.500px;top:3.700px" width="12.5" height="12.5" viewBox="0 0 11 11"><path d="M.7.700h9.600L6.6 5.200v5L4.4 8.600V5.200z" fill="none" stroke="#a3a3a3" stroke-width="1" stroke-linejoin="round"/></svg></div>
<div class="ib" style="left:1085.6px;width:22.5px"><svg style="left:4px;top:5px" width="13" height="10" viewBox="0 0 13 10"><g fill="#b5b5b5"><rect x="0" y="7" width="1.8" height="3"/><rect x="3.4" y="3.5" width="1.8" height="6.5"/><rect x="6.8" y="5.5" width="1.8" height="4.5"/><rect x="10.2" y="0" width="2" height="10"/></g></svg></div>
<div class="abs" style="left:43.0px;top:126.0px;width:12.500px;height:12.500px;border:1px solid #d9c36f;border-radius:2px;background:#ffeba0"></div><svg style="left:45.8px;top:123.6px" width="13" height="13" viewBox="0 0 14 14"><path d="M1 7.200l3.6 4.200L12.8 .5" stroke="#000" stroke-width="1.6" fill="none"/></svg>
<div class="abs ys" id="tot" style="left:60.6px;top:126.5px;font-size:11.700px;line-height:14px;white-space:nowrap;color:#111">Итого и средние</div>
<div class="val" style="right:401.0px;word-spacing:-1px">267 623</div>
<div class="val" style="right:284.0px;word-spacing:-1px">245 469</div>
<div class="val" style="right:191.8px;word-spacing:-1px">7,89 %</div>
<div class="val" style="right:97.0px;word-spacing:-1px">1,15</div>
<div class="val" style="right:10.2px;word-spacing:-1px">1:15</div>
</div>

<div id="sb"><div class="up"></div><div class="th"></div></div>

<!-- ================= TASKBAR ================= -->
<div id="task">
<svg style="left:8.8px;top:6.0px" width="15" height="15" viewBox="0 0 15 15"><path d="M0 2.100L6.2 1.200V7H0zM7 1.100L15 0v7H7zM0 7.800h6.200v5.900L0 12.800zM7 7.800h8V15l-8-1.100z" fill="#fff"/></svg>
<svg style="left:41.0px;top:6.0px" width="15" height="15" viewBox="0 0 15 15"><circle cx="9.3" cy="5.7" r="4.7" fill="none" stroke="#fff" stroke-width="1.4"/><path d="M6 9L.6 14.4" stroke="#fff" stroke-width="1.6"/></svg>
<svg style="left:73.0px;top:6.5px" width="16" height="14" viewBox="0 0 16 14"><g fill="none" stroke="#fff" stroke-width="1.3"><rect x="2.6" y="3.6" width="7.6" height="6.8"/><path d="M2.6 1H10.200M2.6 13H10.200M13 3.600v10M13 .5v1.7"/></g></svg>
<svg style="left:109.0px;top:6.0px" width="14" height="15" viewBox="0 0 14 15"><path d="M.4 6.600C1 2.6 3.8.2 7.4.2c4 0 6.4 2.8 6.4 6.800v1.600H4.800c.2 2.2 1.8 3.4 4.2 3.4 1.6 0 3-.4 4.2-1.200v3c-1.4.8-3 1.2-5 1.200C3.8 15 .8 12.2.8 8.200c0-2 1-3.8 2.6-4.8-.8.8-1.2 1.8-1.4 2.800h7.600C9.6 4.4 8.6 3 6.6 3 4 3 1.8 4.4.4 6.600z" fill="#1f8de8"/></svg>
<svg style="left:142.0px;top:6.0px" width="15" height="15" viewBox="0 0 15 15"><path d="M3.5 1.500h10.500v11.500H1z" fill="#9fd3e6"/><path d="M3.5 1.500h10.500v2H3z" fill="#6fb4cf"/><path d="M1 13h13v1.500H1z" fill="#d9cfa8"/><path d="M4.5 0v2.500M6.5 0v2.500M8.5 0v2.500M10.5 0v2.500M12.5 0v2.5" stroke="#c9e6f0" stroke-width=".8"/></svg>
<svg style="left:174.7px;top:6.5px" width="16" height="14" viewBox="0 0 16 14"><path d="M0 1.200h6l1.2 1.500H14v2H0z" fill="#e8b738"/><rect x="0" y="3.5" width="16" height="10" rx=".6" fill="#ffd766"/><path d="M4 13.500V8.300h8v5.200h-2.400v-2.800H6.400v2.800z" fill="#2f9be6"/></svg>
<svg style="left:208.5px;top:6.0px" width="15" height="15" viewBox="0 0 15 15"><rect width="15" height="15" rx="1" fill="#3f87c9"/><rect x="1.3" y="1.3" width="12.4" height="12.4" fill="#7db4e3"/><circle cx="7.5" cy="7.5" r="5" fill="#f58a1f"/><path d="M6 4.700L10.5 7.5 6 10.300z" fill="#fff"/></svg>
<svg style="left:241.5px;top:6.0px" width="15" height="15" viewBox="0 0 15 15"><circle cx="7.5" cy="7.5" r="7.5" fill="#6aa52c"/><circle cx="7.5" cy="7.5" r="5" fill="#8fc93f"/><path d="M4.5 10.500C5 6.5 8 4.5 11 4.5 10.5 8 8 10.5 4.5 10.500z" fill="#4d8a1e"/></svg>
<svg style="left:275.5px;top:6.0px" width="15" height="15" viewBox="0 0 15 15"><circle cx="7.5" cy="7.5" r="7" fill="#0d0d0d" stroke="#e5141a" stroke-width="1.6"/><circle cx="7.5" cy="7.5" r="2.8" fill="none" stroke="#e5141a" stroke-width="1.8" stroke-dasharray="1.5 1"/></svg>
<svg style="left:309.0px;top:6.5px" width="14" height="14" viewBox="0 0 14 14"><circle cx="7" cy="7" r="7" fill="#db4437"/><path d="M7 7L1 3.300A7 7 0 0 0 3.7 13.200z" fill="#0f9d58"/><path d="M7 7L3.7 13.200A7 7 0 0 0 13.9 5.800z" fill="#ffcd40"/><path d="M7 7l6.9-1.200A7 7 0 0 0 1 3.300z" fill="#db4437"/><circle cx="7" cy="7" r="3.3" fill="#fff"/><circle cx="7" cy="7" r="2.6" fill="#4285f4"/><circle cx="10.8" cy="11.3" r="2.3" fill="#e9e9e9"/><path d="M9.6 11.300h2.400M10.8 10.200v2.2" stroke="#555" stroke-width=".7"/></svg>
<div class="abs" style="left:303px;top:25px;width:25.500px;height:2px;background:#8ea0bf"></div>
<svg style="left:342.0px;top:6.5px" width="15" height="14" viewBox="0 0 15 14"><rect x=".6" y=".6" width="13.8" height="12.8" fill="#0a2233" stroke="#2fc3ee" stroke-width="1.2"/><text x="7.5" y="10.3" font-size="8" font-weight="bold" fill="#2fc3ee" text-anchor="middle" font-family="Liberation Sans,sans-serif">Ps</text></svg>
<svg style="left:375.0px;top:6.5px" width="15" height="14" viewBox="0 0 15 14"><rect x=".6" y=".6" width="13.8" height="12.8" fill="#0d2230" stroke="#9fc2dd" stroke-width="1.2"/><text x="7.5" y="10.3" font-size="8" font-weight="bold" fill="#b9d6ea" text-anchor="middle" font-family="Liberation Sans,sans-serif">Lr</text></svg>
<svg style="left:408.0px;top:6.5px" width="15" height="14" viewBox="0 0 15 14"><rect x="6" y="1.5" width="9" height="11" fill="#fff"/><path d="M8.5 4h5M8.5 6h5M8.5 8h5M8.5 10h5" stroke="#2b579a" stroke-width=".9"/><path d="M0 1.400L9 0v14L0 12.600z" fill="#2b579a"/><text x="4.5" y="10" font-size="7.5" font-weight="bold" fill="#fff" text-anchor="middle" font-family="Liberation Sans,sans-serif">W</text></svg>
<svg style="left:444.0px;top:6.0px" width="11" height="15" viewBox="0 0 11 15"><rect width="11" height="15" rx="1" fill="#f2f2f2"/><rect x="1.5" y="1.5" width="8" height="3" fill="#9a9a9a"/><g fill="#777"><rect x="1.5" y="6" width="2" height="2"/><rect x="4.5" y="6" width="2" height="2"/><rect x="7.5" y="6" width="2" height="2"/><rect x="1.5" y="9" width="2" height="2"/><rect x="4.5" y="9" width="2" height="2"/><rect x="7.5" y="9" width="2" height="2"/><rect x="1.5" y="12" width="2" height="2"/><rect x="4.5" y="12" width="2" height="2"/><rect x="7.5" y="12" width="2" height="2"/></g></svg>
<svg style="left:475.0px;top:6.5px" width="15" height="14" viewBox="0 0 15 14"><rect x="6" y="1.5" width="9" height="11" fill="#fff"/><g fill="#1f7244"><rect x="9.5" y="3" width="2" height="1.6"/><rect x="12" y="3" width="2" height="1.6"/><rect x="9.5" y="5.4" width="2" height="1.6"/><rect x="12" y="5.4" width="2" height="1.6"/><rect x="9.5" y="7.8" width="2" height="1.6"/><rect x="12" y="7.8" width="2" height="1.6"/><rect x="9.5" y="10.2" width="2" height="1.6"/><rect x="12" y="10.2" width="2" height="1.6"/></g><path d="M0 1.400L9 0v14L0 12.600z" fill="#1f7244"/><text x="4.5" y="10" font-size="7.5" font-weight="bold" fill="#fff" text-anchor="middle" font-family="Liberation Sans,sans-serif">X</text></svg>
<svg style="left:508.0px;top:6.5px" width="15" height="14" viewBox="0 0 15 14"><rect x="6" y="1.5" width="9" height="11" fill="#fff"/><g fill="#7a2fb5"><rect x="12.5" y="2.5" width="2.5" height="2.5"/><rect x="12.5" y="5.8" width="2.5" height="2.5"/><rect x="12.5" y="9.1" width="2.5" height="2.5"/></g><path d="M0 1.400L9.5 0v14L0 12.600z" fill="#8a2fc9"/><text x="4.8" y="10" font-size="7.5" font-weight="bold" fill="#fff" text-anchor="middle" font-family="Liberation Sans,sans-serif">N</text><text x="10.8" y="10.2" font-size="6.5" font-weight="bold" fill="#7a2fb5" text-anchor="middle" font-family="Liberation Sans,sans-serif">F</text></svg>
<svg style="left:541.0px;top:6.0px" width="15" height="15" viewBox="0 0 15 15"><rect x="1" y="2" width="11" height="12.5" fill="#f4f4f0"/><path d="M1 2h11v1.500H1z" fill="#bdbdb5"/><rect x="2.5" y="8.5" width="8" height="4.5" fill="#8bd23c"/><path d="M12.6 .8l1.8 1.600L8 11.500l-2.4.8.6-2.400z" fill="#f0a63a"/><path d="M12.6 .8l1.8 1.6-1 1.4-1.8-1.600z" fill="#d9342b"/><path d="M5.6 12.300l.6-2.4 1.8 1.600z" fill="#3a3a3a"/></svg>
<svg style="left:574.5px;top:5.5px" width="15" height="16" viewBox="0 0 15 16"><path d="M6 0c5 1 8.5 4.5 8.5 8S11 15 6 16c3-2 4.5-5 4.5-8S9 2 6 0z" fill="#2d4e7f"/><path d="M4 1.500c4.5 1 7 3.8 7 6.500s-2.5 5.5-7 6.500c2.4-1.8 3.5-4 3.5-6.500S6.4 3.3 4 1.500z" fill="#9db7d9"/><circle cx="1.8" cy="7.5" r="1.6" fill="#3fae49"/></svg>
<svg style="left:608.5px;top:6.5px" width="14" height="14" viewBox="0 0 14 14"><circle cx="7" cy="7" r="7" fill="#2a9ad6"/><path d="M2.6 6.900L11 3.6 9.6 10.6 7 8.7 5.7 10 5.5 7.9 9.3 4.9 4.6 7.600z" fill="#fff"/></svg>
<svg style="left:640.5px;top:5.5px" width="16" height="16" viewBox="0 0 16 16"><circle cx="7.5" cy="8.5" r="6.5" fill="none" stroke="#1e74d9" stroke-width="2"/><path d="M7.5 5.500a3 3 0 1 0 3 3H7.5" stroke="#1e74d9" stroke-width="1.8" fill="none"/><circle cx="11.5" cy="4.3" r="3.6" fill="#e8404a"/><path d="M9.8 4.800c1-1 2.4-1 3.4 0" stroke="#fff" stroke-width="1" fill="none"/><path d="M10 9.500h4l-.8 3.5-1.2 1.5-1.2-1.500z" fill="#2f9be6"/></svg>
<svg style="left:676.0px;top:6.0px" width="12" height="15" viewBox="0 0 12 15"><ellipse cx="6" cy="8" rx="5.8" ry="7" fill="#1668c4"/><ellipse cx="6" cy="9" rx="3.3" ry="4.3" fill="#6cc24a"/></svg>
<svg style="left:707.0px;top:8.0px" width="15" height="11" viewBox="0 0 15 11"><path d="M0 5.500L6.5 0 15 5.5 8.5 11z" fill="#f2f2f2"/><path d="M6.5 8.200L9.5 2.8" stroke="#2a8fd6" stroke-width="1.6"/><path d="M2.5 5.500L6.5 2 12.5 5.5 8.5 9z" fill="none" stroke="#555" stroke-width=".6"/></svg>
<svg style="left:740.0px;top:6.0px" width="16" height="15" viewBox="0 0 16 15"><path d="M5 .5L1.5 4l2.5.300L8 8.500l1.5-1.500L5.5 2.800z" fill="#2f7fe0"/><path d="M15 14.500l-.5-5-1.7 1.700L9.5 8 8 9.500l3.2 3.300L9.5 14.500z" fill="#2fb344"/><rect x="2" y="9" width="6" height="5.5" fill="#b9c3cf"/><path d="M3.3 9V7.600a1.7 1.7 0 0 1 3.4 0V9" stroke="#8a95a3" stroke-width="1" fill="none"/><rect x="4.3" y="10.8" width="1.4" height="2" fill="#555"/></svg>
<svg style="left:775.0px;top:6.0px" width="14" height="15" viewBox="0 0 14 15"><path d="M0 0h14v11.500h-2.500V15H9.500v-3.500H4.500V15H2.500v-3.500H0z" fill="#f6c80f"/><path d="M2.5 2.500h9M2.5 5.500h9" stroke="#5a4600" stroke-width="1.5"/><rect x="4.5" y="8" width="5" height="3.5" fill="#8a6d00"/></svg>
<svg style="left:808.5px;top:7.0px" width="14" height="13" viewBox="0 0 14 13"><defs><linearGradient id="rg" x1="0" y1="0" x2="1" y2="1"><stop offset="0" stop-color="#ff7a1a"/><stop offset="1" stop-color="#e8141e"/></linearGradient></defs><rect width="14" height="13" fill="url(#rg)"/><path d="M4 3.500l6 6M10 3.500l-6 6" stroke="#fff" stroke-width="1.3"/></svg>
<svg style="left:841.0px;top:6.0px" width="15" height="15" viewBox="0 0 15 15"><circle cx="7.5" cy="7.5" r="6.2" fill="#1ea7e8"/><circle cx="3.6" cy="3.6" r="3.3" fill="#1ea7e8"/><circle cx="11.4" cy="11.4" r="3.3" fill="#1ea7e8"/><text x="7.5" y="10.8" font-size="9.5" font-weight="bold" fill="#fff" text-anchor="middle" font-family="Liberation Sans,sans-serif">S</text></svg>
<svg style="left:875.0px;top:6.0px" width="15" height="15" viewBox="0 0 15 15"><circle cx="7.5" cy="7.5" r="6.4" fill="#111" stroke="#fff" stroke-width="1.7"/><circle cx="7.5" cy="7.5" r="3.6" fill="#ee1c25"/></svg>
<svg style="left:908.5px;top:6.0px" width="15" height="15" viewBox="0 0 15 15"><circle cx="7.5" cy="7.5" r="7.3" fill="#6e4a1f"/><circle cx="7.5" cy="7.5" r="5.8" fill="none" stroke="#8a6230" stroke-width="1" stroke-dasharray="1.5 1"/><path d="M5.5 4v7M9.5 4v7M7.5 5v6" stroke="#4a3012" stroke-width="1.3"/></svg>
<div class="tt" id="rs" style="left:966px;top:6.500px;color:#d6d6d6;font-size:10.800px">Рабочий стол</div>
<div class="tt" style="left:1040.500px;top:0.500px;font-size:13.500px;color:#e8e8e8">»</div>
<svg style="left:1064.3px;top:6.7px" width="14" height="13" viewBox="0 0 14 13"><g fill="none" stroke="#f0f0f0" stroke-width="1.2"><circle cx="9.8" cy="3" r="2.3"/><path d="M6.5 9.500c.3-2 1.5-3.3 3.3-3.300s3 1.3 3.3 3.3"/><circle cx="4.3" cy="6.3" r="2.3"/><path d="M.8 13c.3-2.3 1.6-3.6 3.5-3.600S7.5 10.7 7.8 13"/></g></svg>
<svg style="left:1092.0px;top:10.7px" width="12" height="6" viewBox="0 0 12 6"><path d="M.5 5.700L6 .8l5.5 4.9" stroke="#f0f0f0" stroke-width="1.3" fill="none"/></svg>
<svg style="left:1111.4px;top:7.5px" width="16" height="12" viewBox="0 0 16 12"><g fill="none" stroke="#f0f0f0" stroke-width="1.1"><path d="M.6 4h2.600L6.5 .8v10.400L3.2 8H.6z"/><path d="M8.5 3.800c1 1.3 1 3.1 0 4.400M10.7 2.200c1.8 2.3 1.8 5.3 0 7.600M12.9 .8c2.5 3.2 2.5 7.2 0 10.4"/></g></svg>
<svg style="left:1133.7px;top:7.7px" width="15" height="12" viewBox="0 0 15 12"><g fill="none" stroke="#f0f0f0" stroke-width="1.1"><path d="M3.5 1H14.400v7.500H3.500z"/><path d="M9 8.500v2.300M5.5 11.200h7"/><rect x=".6" y=".6" width="3.6" height="3.2" fill="#2a2a2a"/><path d="M2.4 3.800v7.400h3"/></g></svg>
<div class="abs" style="left:1152.500px;top:0;width:28.500px;height:27px;background:#454545"></div>
<svg style="left:1158.5px;top:6.5px" width="16" height="14" viewBox="0 0 16 14"><g fill="none" stroke="#f0f0f0" stroke-width="1.2"><path d="M11.5 .8l2.2 1.500L7.5 12l-2.6 1 .4-2.600z"/><path d="M6 5.500C3 5 1 7 1 9.500s2 3.5 3.8 2.5"/><path d="M11 8c1.5-1 3-.5 3.8.8"/></g></svg>
<div class="tt" id="eng" style="left:1186.500px;font-size:10.500px;letter-spacing:-0.900px">ENG</div>
<div class="tt" id="clk" style="left:1219px;font-size:10.500px;letter-spacing:-0.600px">15:13</div>
<svg style="left:1258.7px;top:7.0px" width="15" height="14" viewBox="0 0 15 14"><path d="M.6 .6h13.800v10H9.500L7.5 13.2 5.5 10.600H.6z" fill="none" stroke="#f0f0f0" stroke-width="1.2"/></svg>
<div class="abs" style="left:1292px;top:0;width:1px;height:27px;background:#5a5a5a"></div>
</div>

</body>
</html>
